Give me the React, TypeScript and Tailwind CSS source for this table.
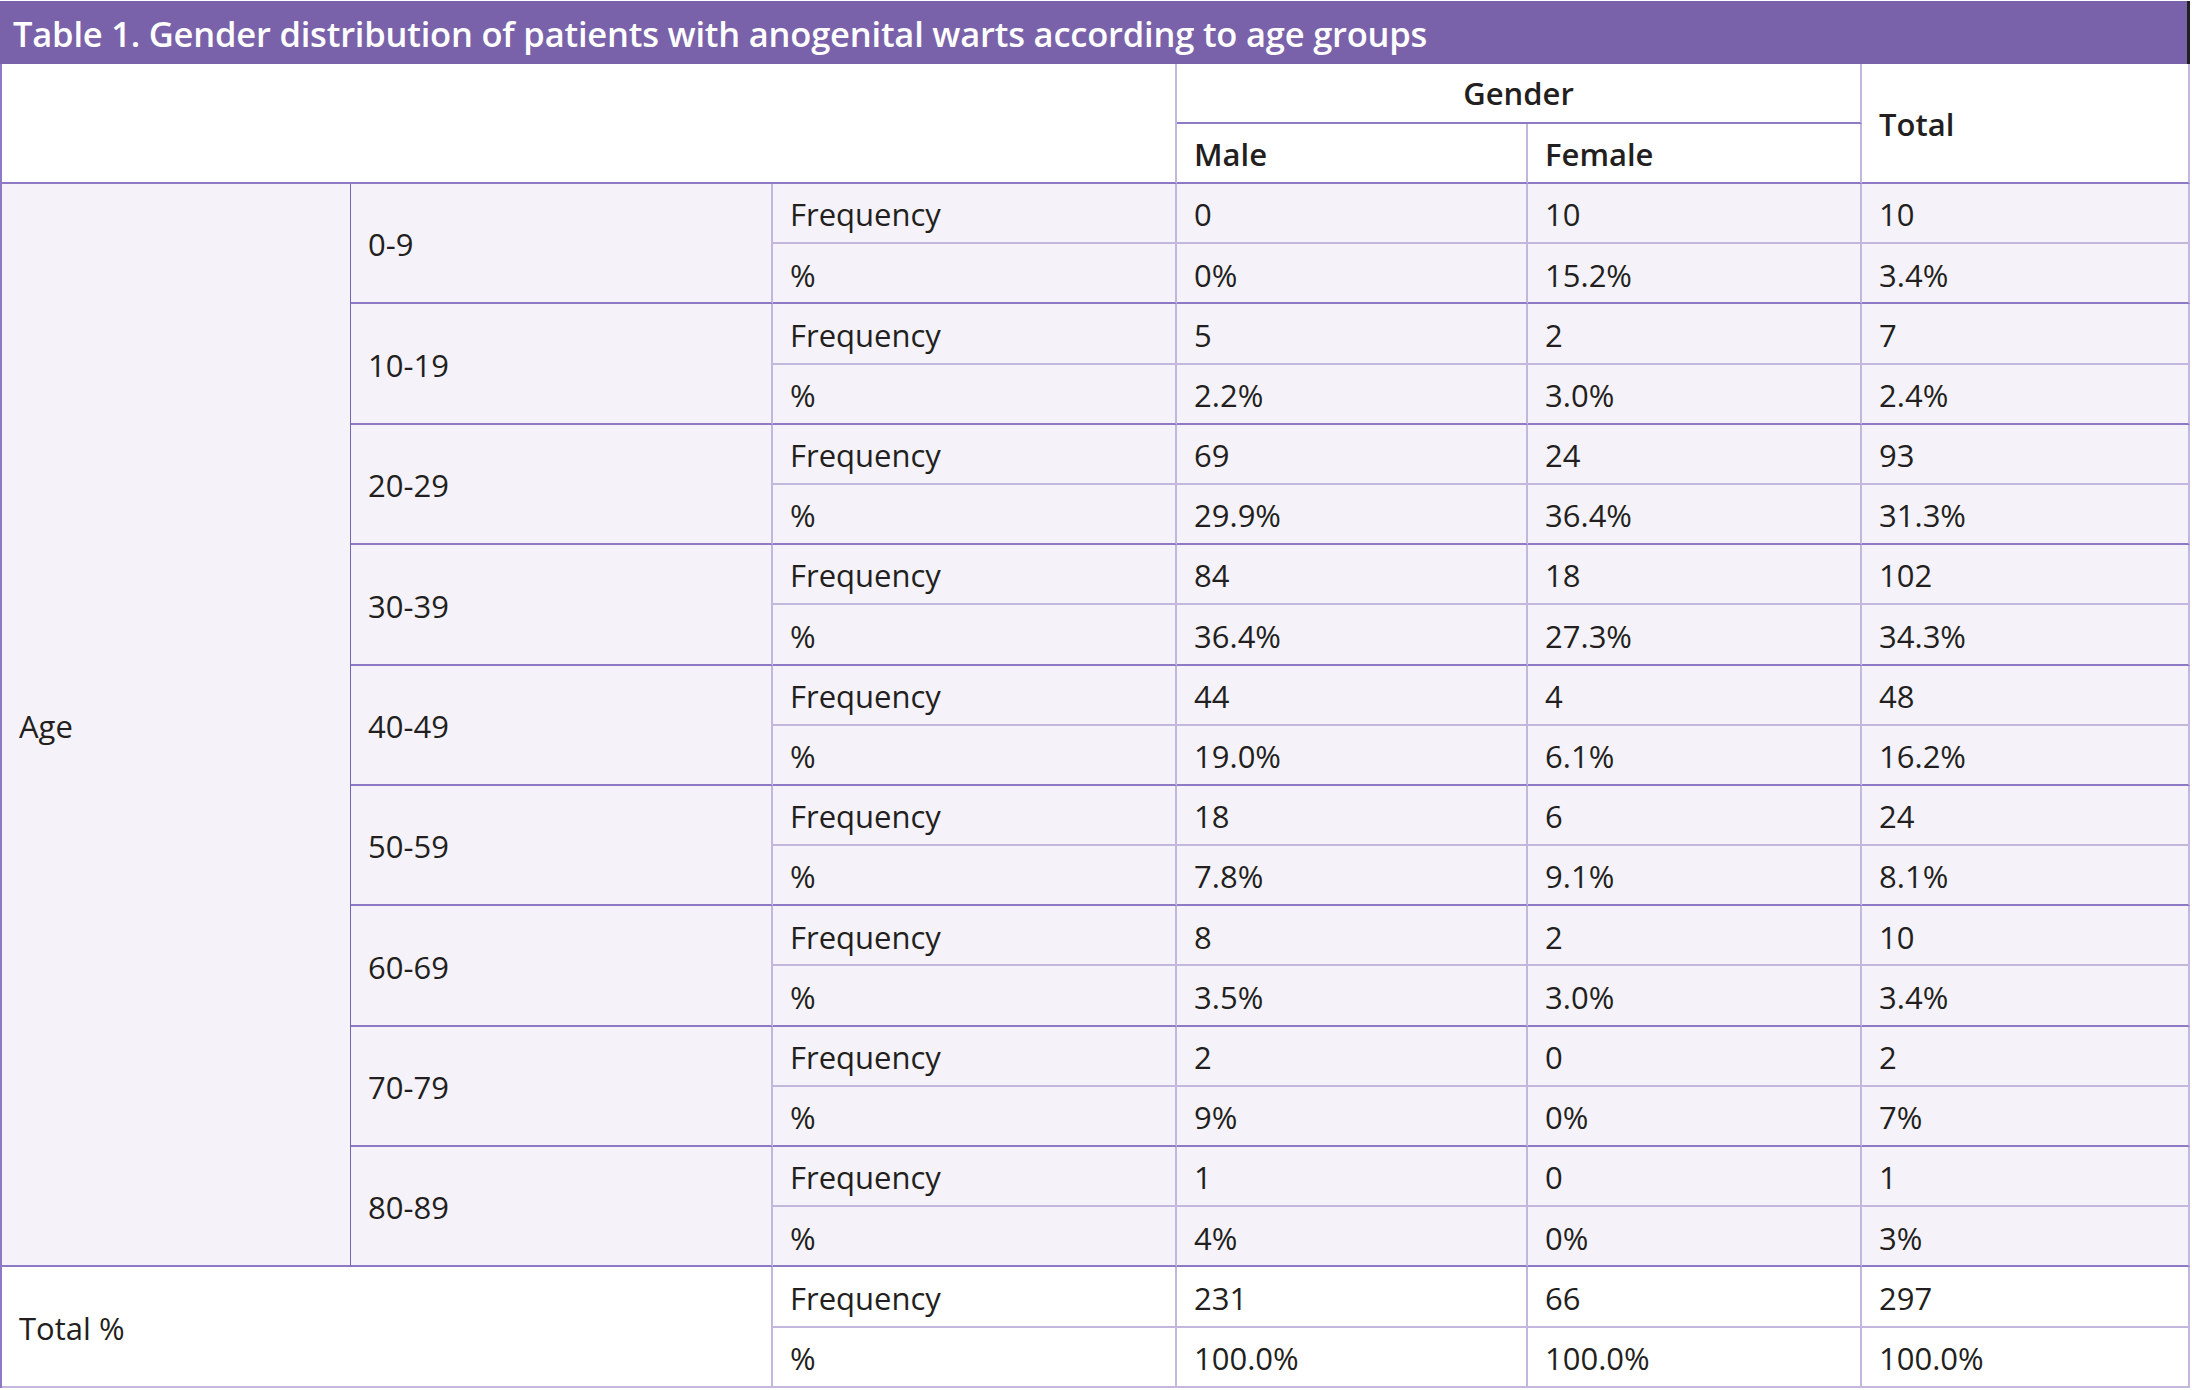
import React from "react";

const groups = [
  { age: "0-9", f: ["0", "10", "10"], p: ["0%", "15.2%", "3.4%"] },
  { age: "10-19", f: ["5", "2", "7"], p: ["2.2%", "3.0%", "2.4%"] },
  { age: "20-29", f: ["69", "24", "93"], p: ["29.9%", "36.4%", "31.3%"] },
  { age: "30-39", f: ["84", "18", "102"], p: ["36.4%", "27.3%", "34.3%"] },
  { age: "40-49", f: ["44", "4", "48"], p: ["19.0%", "6.1%", "16.2%"] },
  { age: "50-59", f: ["18", "6", "24"], p: ["7.8%", "9.1%", "8.1%"] },
  { age: "60-69", f: ["8", "2", "10"], p: ["3.5%", "3.0%", "3.4%"] },
  { age: "70-79", f: ["2", "0", "2"], p: ["9%", "0%", "7%"] },
  { age: "80-89", f: ["1", "0", "1"], p: ["4%", "0%", "3%"] },
];

const base = "pl-[17px] pt-[3px] text-left align-middle";
const freqCell = `${base} border-r-2 border-b-2 border-r-[#c3b7de] border-b-[#c3b7de]`;
const pctCell = `${base} border-r-2 border-b-2 border-r-[#c3b7de] border-b-[#8e7ac4]`;

export default function App() {
  return (
    <div
      className="w-[2192px] h-[1390px] overflow-hidden bg-white text-[#231f20] text-[31px]"
      style={{ fontFamily: '"Open Sans", "Noto Sans", sans-serif' }}
    >
      <div className="w-[2190px] h-[63px] mt-px bg-[#7a62aa] border-r-[3px] border-r-[#231f20] flex items-center pl-[13px]">
        <span className="text-white font-semibold text-[34.5px] tracking-[-0.2px] pt-[2px]">
          Table 1. Gender distribution of patients with anogenital warts according to age groups
        </span>
      </div>
      <table className="w-[2190px] border-separate border-spacing-0 table-fixed border-l-2 border-l-[#8e7ac4]">
        <colgroup>
          <col className="w-[349px]" />
          <col className="w-[422px]" />
          <col className="w-[404px]" />
          <col className="w-[351px]" />
          <col className="w-[334px]" />
          <col className="w-[328px]" />
        </colgroup>
        <thead>
          <tr className="h-[60px]">
            <td
              colSpan={3}
              rowSpan={2}
              className="bg-white border-r-2 border-b-2 border-r-[#c3b7de] border-b-[#8e7ac4]"
            />
            <th
              colSpan={2}
              className="bg-white font-semibold text-center align-middle border-r-2 border-b-2 border-r-[#c3b7de] border-b-[#8e7ac4]"
            >
              Gender
            </th>
            <th
              rowSpan={2}
              className="bg-white font-semibold pl-[17px] pt-[2px] text-left align-middle border-r-2 border-b-2 border-r-[#c3b7de] border-b-[#8e7ac4]"
            >
              Total
            </th>
          </tr>
          <tr className="h-[60px]">
            <th className="bg-white font-semibold pl-[17px] pt-[2px] text-left align-middle border-r-2 border-b-2 border-r-[#c3b7de] border-b-[#8e7ac4]">
              Male
            </th>
            <th className="bg-white font-semibold pl-[17px] pt-[2px] text-left align-middle border-r-2 border-b-2 border-r-[#c3b7de] border-b-[#8e7ac4]">
              Female
            </th>
          </tr>
        </thead>
        <tbody className="bg-[#f5f3f9]">
          {groups.map((g, i) => (
            <React.Fragment key={g.age}>
              <tr className="h-[60.2px]">
                {i === 0 && (
                  <td
                    rowSpan={18}
                    className={`${base} border-r border-b-2 border-r-[#7a62b4] border-b-[#8e7ac4]`}
                  >
                    Age
                  </td>
                )}
                <td
                  rowSpan={2}
                  className={`${base} border-r-2 border-b-2 border-r-[#c3b7de] border-b-[#8e7ac4]`}
                >
                  {g.age}
                </td>
                <td className={freqCell}>Frequency</td>
                {g.f.map((v, j) => (
                  <td key={j} className={freqCell}>
                    {v}
                  </td>
                ))}
              </tr>
              <tr className="h-[60.2px]">
                <td className={pctCell}>%</td>
                {g.p.map((v, j) => (
                  <td key={j} className={pctCell}>
                    {v}
                  </td>
                ))}
              </tr>
            </React.Fragment>
          ))}
          <tr className="h-[60.2px] bg-white">
            <td
              colSpan={2}
              rowSpan={2}
              className={`${base} border-r-2 border-b-2 border-r-[#c3b7de] border-b-[#c3b7de]`}
            >
              Total %
            </td>
            <td className={freqCell}>Frequency</td>
            <td className={freqCell}>231</td>
            <td className={freqCell}>66</td>
            <td className={freqCell}>297</td>
          </tr>
          <tr className="h-[60.2px] bg-white">
            <td className={freqCell}>%</td>
            <td className={freqCell}>100.0%</td>
            <td className={freqCell}>100.0%</td>
            <td className={freqCell}>100.0%</td>
          </tr>
        </tbody>
      </table>
    </div>
  );
}
